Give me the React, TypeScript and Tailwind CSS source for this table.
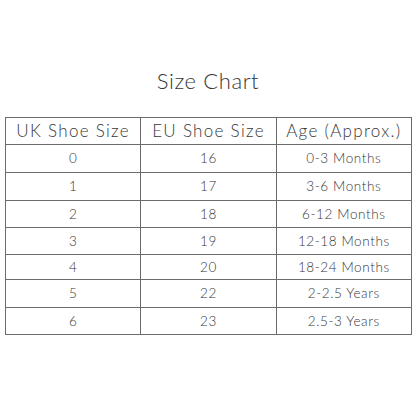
import React from "react";

const rows: [string, string, string][] = [
  ["0", "16", "0-3 Months"],
  ["1", "17", "3-6 Months"],
  ["2", "18", "6-12 Months"],
  ["3", "19", "12-18 Months"],
  ["4", "20", "18-24 Months"],
  ["5", "22", "2-2.5 Years"],
  ["6", "23", "2.5-3 Years"],
];

const heights = ["h-[28px]", "h-[28px]", "h-[27px]", "h-[27px]", "h-[25px]", "h-[28px]", "h-[27px]"];

export default function App() {
  return (
    <div
      className="w-[416px] h-[416px] bg-white text-[#363636]"
      style={{ fontFamily: "Lato, 'Open Sans', sans-serif" }}
    >
      <div className="pt-[66px] h-[117px] text-center text-[22px] font-light leading-[30px] tracking-[0.6px]">Size Chart</div>
      <div className="ml-[5px] w-[407px] border-l border-t border-[#6b6b6b]">
        <div className="grid grid-cols-3 h-[27px] text-[17px] font-light tracking-[1.3px]">
          <div className="border-r border-b border-[#6b6b6b] flex items-center justify-center">UK Shoe Size</div>
          <div className="border-r border-b border-[#6b6b6b] flex items-center justify-center">EU Shoe Size</div>
          <div className="border-r border-b border-[#6b6b6b] flex items-center justify-center">Age (Approx.)</div>
        </div>
        {rows.map((r, i) => (
          <div key={i} className={`grid grid-cols-3 ${heights[i]} text-[13.5px] font-light tracking-[0.6px]`}>
            {r.map((c, j) => (
              <div key={j} className="border-r border-b border-[#6b6b6b] flex items-center justify-center">
                {c}
              </div>
            ))}
          </div>
        ))}
      </div>
    </div>
  );
}
